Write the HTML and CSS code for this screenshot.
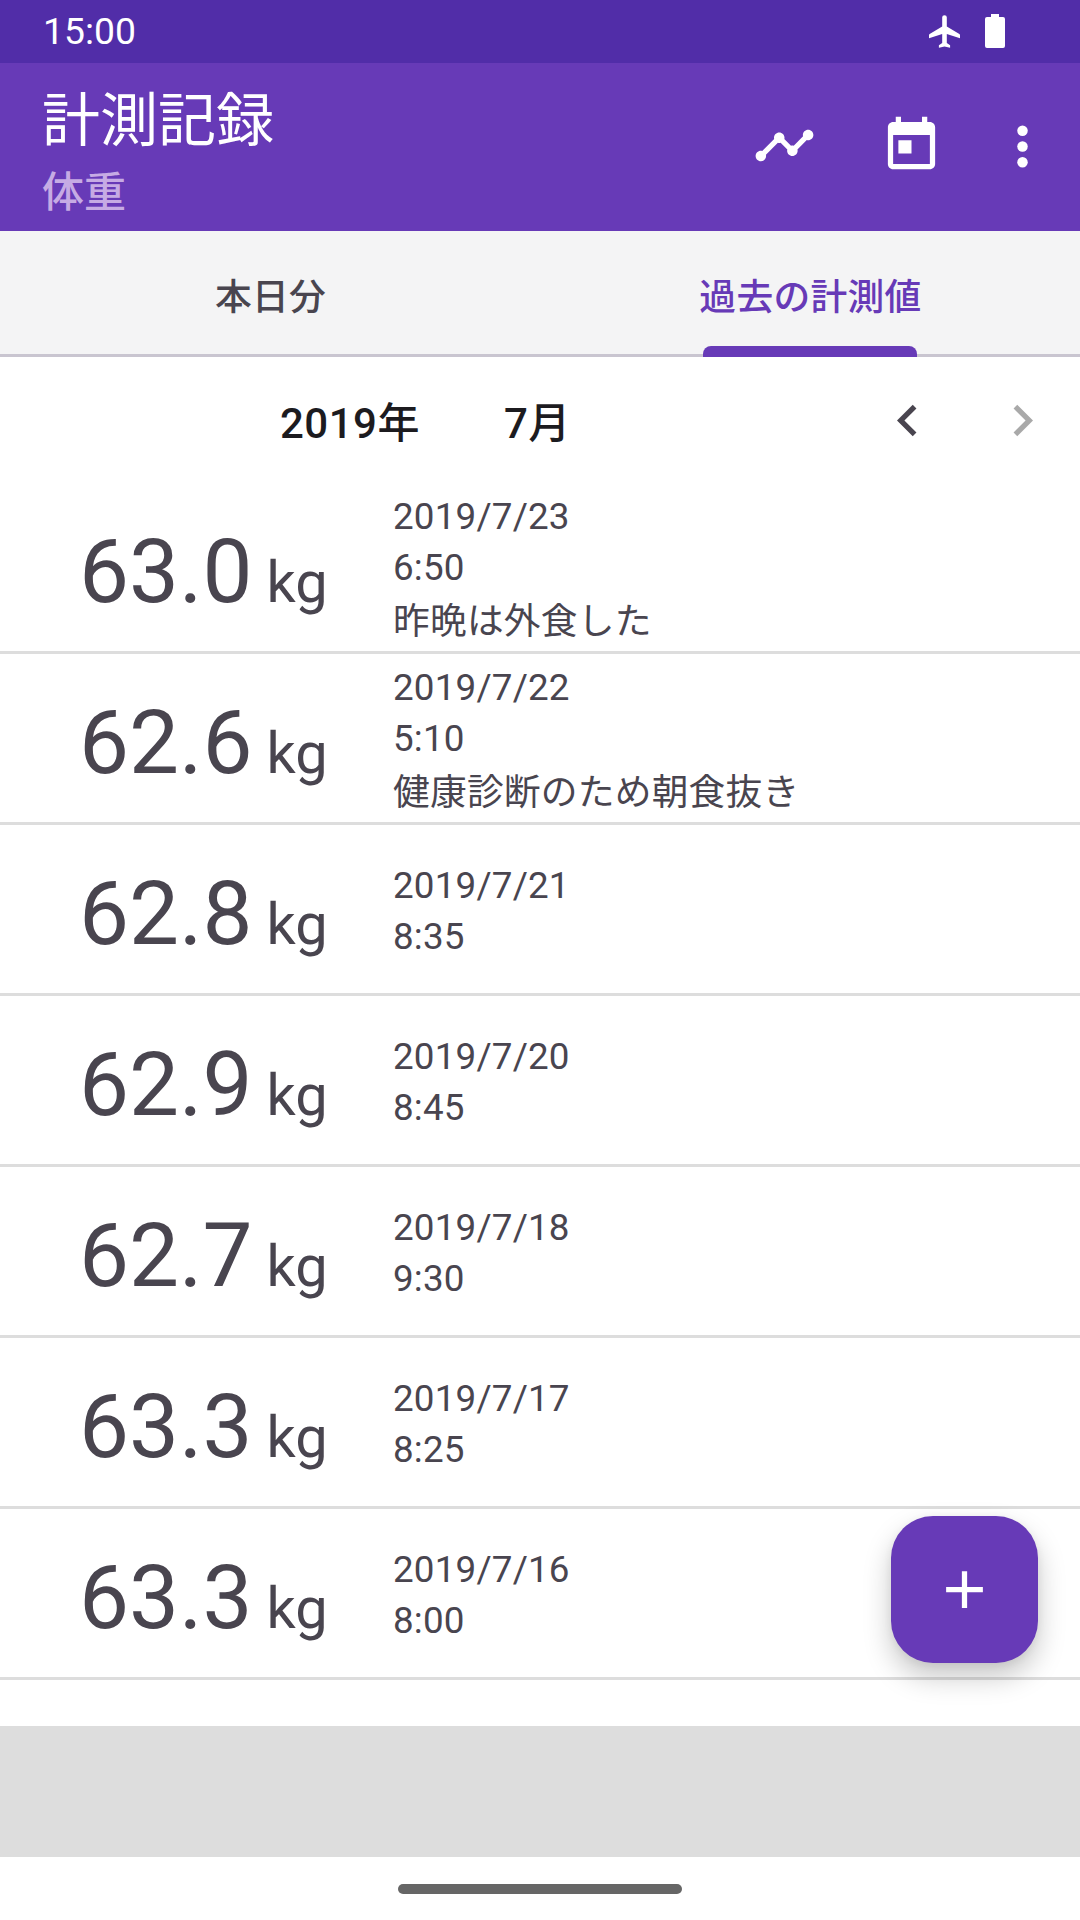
FILE: index.html
```html
<!DOCTYPE html>
<html lang="ja">
<head>
  <meta charset="UTF-8">
  <meta name="viewport" content="width=device-width, initial-scale=1.0">
  <title>計測記録</title>
  <link rel="stylesheet" href="styles.css">
</head>
<body>
  <div class="status-bar">
    <span class="clock">15:00</span>
    <div class="status-icons">
      <svg class="airplane" viewBox="0 0 94 99"><path d="M40 6Q40 0 47 0Q54 0 54 6V34L92 57Q94 58 94 60V70L54 57V84L64 91V99L47 95L30 99V91L40 84V57L0 70V60Q0 58 2 57L40 34z"/></svg>
      <svg class="battery" viewBox="0 0 20 34"><path d="M6 0h8v3h4q2 0 2 2v27q0 2-2 2H2q-2 0-2-2V5q0-2 2-2h4z"/></svg>
    </div>
  </div>

  <header>
    <div class="titles">
      <h1>計測記録</h1>
      <p>体重</p>
    </div>
    <div class="actions">
      <svg class="icon chart" viewBox="0 0 24 24"><path d="M23 8c0 1.1-.9 2-2 2-.18 0-.35-.02-.51-.07l-3.56 3.55c.05.16.07.34.07.52 0 1.1-.9 2-2 2s-2-.9-2-2c0-.18.02-.36.07-.52l-2.55-2.55c-.16.05-.34.07-.52.07s-.36-.02-.52-.07l-4.55 4.56c.05.16.07.33.07.51 0 1.1-.9 2-2 2s-2-.9-2-2 .9-2 2-2c.18 0 .35.02.51.07l4.56-4.55C8.02 9.36 8 9.18 8 9c0-1.1.9-2 2-2s2 .9 2 2c0 .18-.02.36-.07.52l2.55 2.55c.16-.05.34-.07.52-.07s.36.02.52.07l3.55-3.56C19.02 8.35 19 8.18 19 8c0-1.1.9-2 2-2s2 .9 2 2z"/></svg>
      <svg class="icon today" viewBox="0 0 24 24"><path d="M19 3h-1V1h-2v2H8V1H6v2H5c-1.11 0-1.99.9-1.99 2L3 19c0 1.1.89 2 2 2h14c1.1 0 2-.9 2-2V5c0-1.1-.9-2-2-2zm0 16H5V8h14v11zM7 10h5v5H7v-5z"/></svg>
      <svg class="icon more" viewBox="0 0 24 24"><circle cx="12" cy="6" r="2"/><circle cx="12" cy="12" r="2"/><circle cx="12" cy="18" r="2"/></svg>
    </div>
  </header>

  <nav class="tabs">
    <a class="tab">本日分</a>
    <a class="tab active">過去の計測値</a>
  </nav>

  <div class="month-bar">
    <span class="year">2019年</span>
    <span class="month">7月</span>
    <svg class="icon prev" viewBox="0 0 24 24"><path d="M15.41 7.41 14 6l-6 6 6 6 1.41-1.41L10.83 12z"/></svg>
    <svg class="icon next" viewBox="0 0 24 24"><path d="M10 6 8.59 7.41 13.17 12l-4.58 4.59L10 18l6-6z"/></svg>
  </div>

  <main>
    <div class="row">
      <div class="weight">63.0<span class="unit">kg</span></div>
      <div class="details">
        <p>2019/7/23</p>
        <p>6:50</p>
        <p class="memo">昨晩は外食した</p>
      </div>
    </div>
    <div class="row">
      <div class="weight">62.6<span class="unit">kg</span></div>
      <div class="details">
        <p>2019/7/22</p>
        <p>5:10</p>
        <p class="memo">健康診断のため朝食抜き</p>
      </div>
    </div>
    <div class="row">
      <div class="weight">62.8<span class="unit">kg</span></div>
      <div class="details">
        <p>2019/7/21</p>
        <p>8:35</p>
      </div>
    </div>
    <div class="row">
      <div class="weight">62.9<span class="unit">kg</span></div>
      <div class="details">
        <p>2019/7/20</p>
        <p>8:45</p>
      </div>
    </div>
    <div class="row">
      <div class="weight">62.7<span class="unit">kg</span></div>
      <div class="details">
        <p>2019/7/18</p>
        <p>9:30</p>
      </div>
    </div>
    <div class="row">
      <div class="weight">63.3<span class="unit">kg</span></div>
      <div class="details">
        <p>2019/7/17</p>
        <p>8:25</p>
      </div>
    </div>
    <div class="row">
      <div class="weight">63.3<span class="unit">kg</span></div>
      <div class="details">
        <p>2019/7/16</p>
        <p>8:00</p>
      </div>
    </div>
    <button class="fab" aria-label="追加">
      <svg class="icon" viewBox="0 0 24 24"><path d="M19 13h-6v6h-2v-6H5v-2h6V5h2v6h6z"/></svg>
    </button>
  </main>

  <div class="ad-space"></div>
  <footer>
    <div class="handle"></div>
  </footer>
</body>
</html>
```
FILE: styles.css
```css
* {
  box-sizing: border-box;
  margin: 0;
  padding: 0;
}

body {
  display: flex;
  flex-direction: column;
  width: 1080px;
  height: 1920px;
  overflow: hidden;
  background-color: #ffffff;
  color: #49454f;
  font-family: Roboto, 'Noto Sans CJK JP', sans-serif;
  font-size: 36.75px;
}

svg {
  display: block;
  fill: currentColor;
}

.icon {
  width: 63px;
  height: 63px;
}

/* Status bar */
.status-bar {
  display: flex;
  justify-content: space-between;
  height: 63px;
  padding: 0 75px 0 43px;
  background-color: #512da8;
  color: #ffffff;
}

.clock {
  font-size: 37.3px;
  line-height: 63px;
}

.status-icons {
  display: flex;
  gap: 25px;
  padding-top: 14px;
}

.airplane {
  width: 31px;
  height: 33px;
  margin-top: 1px;
}

.battery {
  width: 20px;
  height: 34px;
}

/* App bar */
header {
  display: flex;
  justify-content: space-between;
  height: 168px;
  padding: 18px 26px 0 42px;
  background-color: #673ab7;
  color: #ffffff;
}

h1 {
  font-size: 58px;
  font-weight: 400;
  line-height: 80px;
}

.titles p {
  font-size: 42px;
  font-weight: 500;
  line-height: 64px;
  color: #c6abe4;
}

.actions {
  display: flex;
  padding-top: 33px;
}

.today {
  margin: 0 48px 0 64px;
}

.more {
  margin-top: 1px;
}

/* Tabs */
.tabs {
  display: flex;
  height: 126px;
  background-color: #f4f4f5;
  border-bottom: 3px solid #c9c5d0;
}

.tab {
  position: relative;
  flex: 1;
  padding: 4px 0 0 1px;
  text-align: center;
  font-weight: 500;
  line-height: 126px;
  letter-spacing: 0.3px;
}

.tab.active {
  color: #673ab7;
}

.tab.active::after {
  content: '';
  position: absolute;
  left: 163px;
  bottom: -3px;
  width: 214px;
  height: 11px;
  border-radius: 8px 8px 0 0;
  background-color: #673ab7;
}

/* Month selector */
.month-bar {
  display: flex;
  height: 126px;
  padding: 32px 26px 0 280px;
  font-size: 42px;
  font-weight: 500;
  line-height: 70px;
  letter-spacing: 0.5px;
  color: #1c1b1f;
}

.year {
  width: 224px;
}

.prev {
  margin-left: auto;
  color: #49454f;
}

.next {
  margin-left: 52px;
  color: #a9a9a9;
}

/* Records */
main {
  position: relative;
  height: 1243px;
}

.row {
  display: flex;
  align-items: center;
  height: 171px;
  border-bottom: 3px solid #dddddd;
}

.weight {
  width: 393px;
  padding: 19px 0 0 79px;
  font-size: 89px;
  line-height: 149px;
}

.unit {
  margin-left: 14px;
  font-size: 57.75px;
}

.details {
  padding-top: 3px;
}

.details p {
  line-height: 51px;
  letter-spacing: 0.2px;
}

.details .memo {
  padding-top: 3px;
  line-height: 51px;
}

.fab {
  position: absolute;
  right: 42px;
  bottom: 63px;
  display: flex;
  align-items: center;
  justify-content: center;
  width: 147px;
  height: 147px;
  border: none;
  border-radius: 42px;
  background-color: #673ab7;
  color: #ffffff;
  box-shadow: 0 14px 28px rgba(0, 0, 0, 0.22), 0 2px 8px rgba(0, 0, 0, 0.06);
}

/* Bottom */
.ad-space {
  height: 131px;
  background-color: #dddddd;
}

footer {
  display: flex;
  justify-content: center;
  height: 63px;
  padding-top: 27px;
}

.handle {
  width: 284px;
  height: 10px;
  border-radius: 5px;
  background-color: #666666;
}
```
